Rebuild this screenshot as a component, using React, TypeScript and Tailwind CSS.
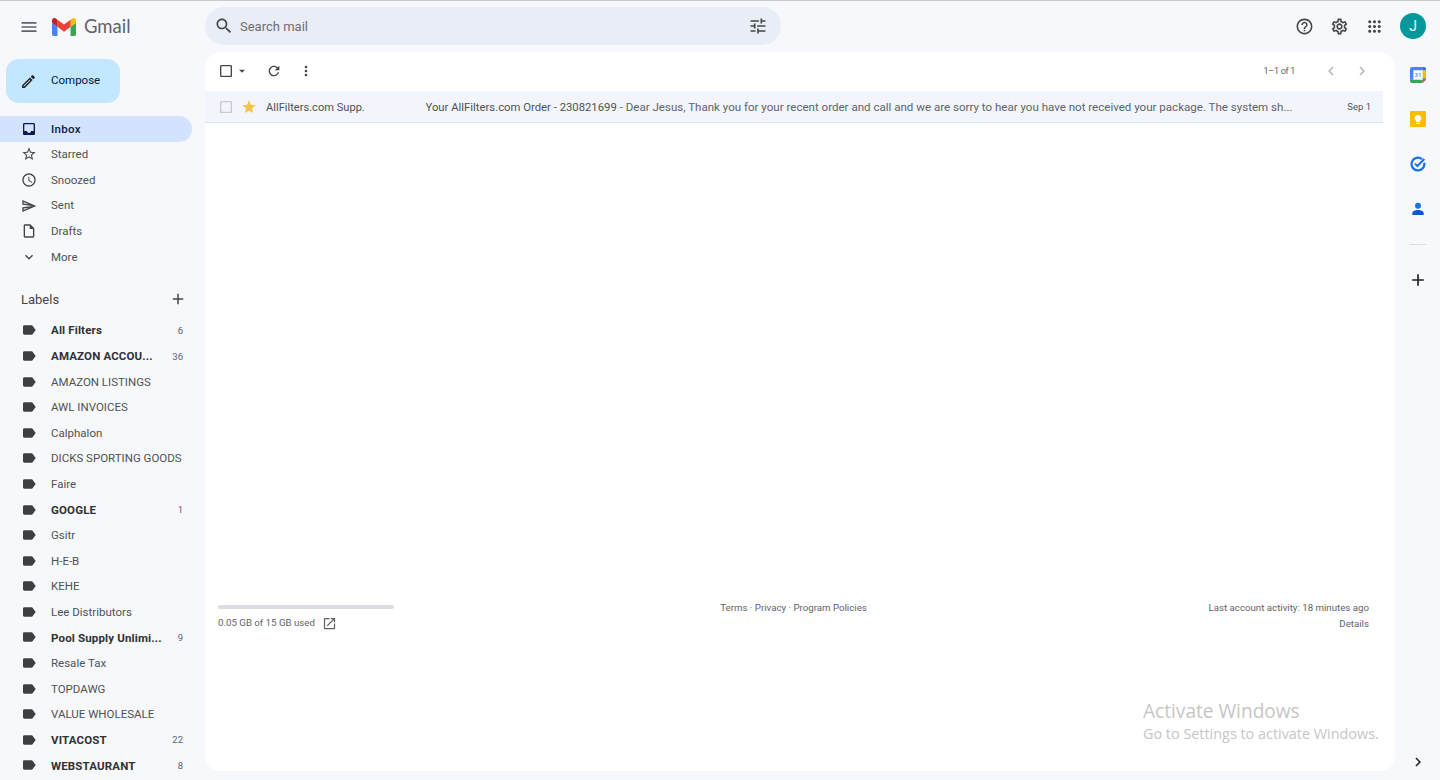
const icons = {
  menu: 'M3 18h18v-2H3v2zm0-5h18v-2H3v2zm0-7v2h18V6H3z',
  search:
    'M15.5 14h-.79l-.28-.27C15.41 12.59 16 11.11 16 9.5 16 5.91 13.09 3 9.5 3S3 5.91 3 9.5 5.91 16 9.5 16c1.61 0 3.09-.59 4.23-1.57l.27.28v.79l5 4.99L20.49 19l-4.99-5zm-6 0C7.01 14 5 11.99 5 9.5S7.01 5 9.5 5 14 7.01 14 9.5 11.99 14 9.5 14z',
  tune: 'M3 17v2h6v-2H3zM3 5v2h10V5H3zm10 16v-2h8v-2h-8v-2h-2v6h2zM7 9v2H3v2h4v2h2V9H7zm14 4v-2H11v2h10zm-6-4h2V7h4V5h-4V3h-2v6z',
  help: 'M11 18h2v-2h-2v2zm1-16C6.48 2 2 6.48 2 12s4.48 10 10 10 10-4.48 10-10S17.52 2 12 2zm0 18c-4.41 0-8-3.59-8-8s3.59-8 8-8 8 3.59 8 8-3.59 8-8 8zm0-14c-2.21 0-4 1.79-4 4h2c0-1.1.9-2 2-2s2 .9 2 2c0 2-3 1.75-3 5h2c0-2.25 3-2.5 3-5 0-2.21-1.79-4-4-4z',
  settings:
    'M19.43 12.98c.04-.32.07-.64.07-.98 0-.34-.03-.66-.07-.98l2.11-1.65c.19-.15.24-.42.12-.64l-2-3.46c-.09-.16-.26-.25-.44-.25-.06 0-.12.01-.17.03l-2.49 1c-.52-.4-1.08-.73-1.69-.98l-.38-2.65C14.46 2.18 14.25 2 14 2h-4c-.25 0-.46.18-.49.42l-.38 2.65c-.61.25-1.17.59-1.69.98l-2.49-1c-.06-.02-.12-.03-.18-.03-.17 0-.34.09-.43.25l-2 3.46c-.13.22-.07.49.12.64l2.11 1.65c-.04.32-.07.65-.07.98 0 .33.03.66.07.98l-2.11 1.65c-.19.15-.24.42-.12.64l2 3.46c.09.16.26.25.44.25.06 0 .12-.01.17-.03l2.49-1c.52.4 1.08.73 1.69.98l.38 2.65c.03.24.24.42.49.42h4c.25 0 .46-.18.49-.42l.38-2.65c.61-.25 1.17-.59 1.69-.98l2.49 1c.06.02.12.03.18.03.17 0 .34-.09.43-.25l2-3.46c.12-.22.07-.49-.12-.64l-2.11-1.65zm-1.98-1.71c.04.31.05.52.05.73 0 .21-.02.43-.05.73l-.14 1.13.89.7 1.08.84-.7 1.21-1.27-.51-1.04-.42-.9.68c-.43.32-.84.56-1.25.73l-1.06.43-.16 1.13-.2 1.35h-1.4l-.19-1.35-.16-1.13-1.06-.43c-.43-.18-.83-.41-1.23-.71l-.91-.7-1.06.43-1.27.51-.7-1.21 1.08-.84.89-.7-.14-1.13c-.03-.31-.05-.54-.05-.74s.02-.43.05-.73l.14-1.13-.89-.7-1.08-.84.7-1.21 1.27.51 1.04.42.9-.68c.43-.32.84-.56 1.25-.73l1.06-.43.16-1.13.2-1.35h1.39l.19 1.35.16 1.13 1.06.43c.43.18.83.41 1.23.71l.91.7 1.06-.43 1.27-.51.7 1.21-1.07.85-.89.7.14 1.13zM12 8c-2.21 0-4 1.79-4 4s1.79 4 4 4 4-1.79 4-4-1.79-4-4-4zm0 6c-1.1 0-2-.9-2-2s.9-2 2-2 2 .9 2 2-.9 2-2 2z',
  apps: 'M6 8c1.1 0 2-.9 2-2s-.9-2-2-2-2 .9-2 2 .9 2 2 2zm6 12c1.1 0 2-.9 2-2s-.9-2-2-2-2 .9-2 2 .9 2 2 2zm-6 0c1.1 0 2-.9 2-2s-.9-2-2-2-2 .9-2 2 .9 2 2 2zm0-6c1.1 0 2-.9 2-2s-.9-2-2-2-2 .9-2 2 .9 2 2 2zm6 0c1.1 0 2-.9 2-2s-.9-2-2-2-2 .9-2 2 .9 2 2 2zm4-8c0 1.1.9 2 2 2s2-.9 2-2-.9-2-2-2-2 .9-2 2zm-4 2c1.1 0 2-.9 2-2s-.9-2-2-2-2 .9-2 2 .9 2 2 2zm6 6c1.1 0 2-.9 2-2s-.9-2-2-2-2 .9-2 2 .9 2 2 2zm0 6c1.1 0 2-.9 2-2s-.9-2-2-2-2 .9-2 2 .9 2 2 2z',
  edit: 'M3 17.25V21h3.75L17.81 9.94l-3.75-3.75L3 17.25zM5.92 19H5v-.92l9.06-9.06.92.92L5.92 19zM20.71 5.63l-2.34-2.34c-.2-.2-.45-.29-.71-.29s-.51.1-.7.29l-1.83 1.83 3.75 3.75 1.83-1.83c.39-.39.39-1.02 0-1.41z',
  inbox:
    'M19 3H4.99c-1.11 0-1.98.89-1.98 2L3 19c0 1.1.88 2 1.99 2H19c1.1 0 2-.9 2-2V5c0-1.11-.9-2-2-2zm0 12h-4c0 1.66-1.35 3-3 3s-2.99-1.34-2.99-3H4.99V5H19v10z',
  star: 'M22 9.24l-7.19-.62L12 2 9.19 8.63 2 9.24l5.46 4.73L5.82 21 12 17.27 18.18 21l-1.63-7.03L22 9.24zM12 15.4l-3.76 2.27 1-4.28-3.32-2.88 4.38-.38L12 6.1l1.71 4.04 4.38.38-3.32 2.88 1 4.28L12 15.4z',
  clock:
    'M11.99 2C6.47 2 2 6.48 2 12s4.47 10 9.99 10C17.52 22 22 17.52 22 12S17.52 2 11.99 2zM12 20c-4.42 0-8-3.58-8-8s3.58-8 8-8 8 3.58 8 8-3.58 8-8 8zm.5-13H11v6l5.25 3.15.75-1.23-4.5-2.67z',
  sent: 'M4.01 6.03l7.51 3.22-7.52-1 .01-2.22m7.5 8.72L4 17.97v-2.22l7.51-1M2.01 3L2 10l15 2-15 2 .01 7L23 12 2.01 3z',
  draft:
    'M14 2H6c-1.1 0-1.99.9-1.99 2L4 20c0 1.1.89 2 1.99 2H18c1.1 0 2-.9 2-2V8l-6-6zM6 20V4h7v5h5v11H6z',
  chevronDown: 'M7.41 8.59 12 13.17l4.59-4.58L18 10l-6 6-6-6z',
  label:
    'M17.63 5.84C17.27 5.33 16.67 5 16 5L5 5.01C3.9 5.01 3 5.9 3 7v10c0 1.1.9 1.99 2 1.99L16 19c.67 0 1.27-.33 1.63-.84L22 12l-4.37-6.16z',
  plus: 'M19 13h-6v6h-2v-6H5v-2h6V5h2v6h6v2z',
  refresh:
    'M17.65 6.35C16.2 4.9 14.21 4 12 4c-4.42 0-7.99 3.58-7.99 8s3.57 8 7.99 8c3.73 0 6.84-2.55 7.73-6h-2.08c-.82 2.33-3.04 4-5.65 4-3.31 0-6-2.69-6-6s2.69-6 6-6c1.66 0 3.14.69 4.22 1.78L13 11h7V4l-2.35 2.35z',
  moreVert:
    'M12 8c1.1 0 2-.9 2-2s-.9-2-2-2-2 .9-2 2 .9 2 2 2zm0 2c-1.1 0-2 .9-2 2s.9 2 2 2 2-.9 2-2-.9-2-2-2zm0 6c-1.1 0-2 .9-2 2s.9 2 2 2 2-.9 2-2-.9-2-2-2z',
  checkbox:
    'M19 5v14H5V5h14m0-2H5c-1.1 0-2 .9-2 2v14c0 1.1.9 2 2 2h14c1.1 0 2-.9 2-2V5c0-1.1-.9-2-2-2z',
  caret: 'M7 10l5 5 5-5z',
  left: 'M15.41 7.41 14 6l-6 6 6 6 1.41-1.41L10.83 12z',
  right: 'M8.59 16.59 10 18l6-6-6-6-1.41 1.41L13.17 12z',
  openNew:
    'M19 19H5V5h7V3H5c-1.11 0-2 .9-2 2v14c0 1.1.89 2 2 2h14c1.1 0 2-.9 2-2v-7h-2v7zM14 3v2h3.59l-9.83 9.83 1.41 1.41L19 6.41V10h2V3h-7z',
  starFill:
    'M12 17.27 18.18 21l-1.64-7.03L22 9.24l-7.19-.61L12 2 9.19 8.63 2 9.24l5.46 4.73L5.82 21z',
};

function Icon({ d, className }: { d: string; className: string }) {
  return (
    <svg viewBox="0 0 24 24" fill="currentColor" className={className}>
      <path d={d} />
    </svg>
  );
}

const nav = [
  { name: 'Inbox', icon: icons.inbox, active: true },
  { name: 'Starred', icon: icons.star },
  { name: 'Snoozed', icon: icons.clock },
  { name: 'Sent', icon: icons.sent },
  { name: 'Drafts', icon: icons.draft },
  { name: 'More', icon: icons.chevronDown },
];

const labels = [
  { name: 'All Filters', count: '6', bold: true },
  { name: 'AMAZON ACCOU...', count: '36', bold: true },
  { name: 'AMAZON LISTINGS' },
  { name: 'AWL INVOICES' },
  { name: 'Calphalon' },
  { name: 'DICKS SPORTING GOODS' },
  { name: 'Faire' },
  { name: 'GOOGLE', count: '1', bold: true },
  { name: 'Gsitr' },
  { name: 'H-E-B' },
  { name: 'KEHE' },
  { name: 'Lee Distributors' },
  { name: 'Pool Supply Unlimi...', count: '9', bold: true },
  { name: 'Resale Tax' },
  { name: 'TOPDAWG' },
  { name: 'VALUE WHOLESALE' },
  { name: 'VITACOST', count: '22', bold: true },
  { name: 'WEBSTAURANT', count: '8', bold: true },
];

function GmailLogo() {
  return (
    <svg viewBox="52 42 88 66" className="w-6 h-[18px]">
      <path fill="#4285f4" d="M58 108h14V74L52 59v43c0 3.32 2.69 6 6 6" />
      <path fill="#34a853" d="M120 108h14c3.32 0 6-2.69 6-6V59l-20 15" />
      <path fill="#fbbc04" d="M120 48v26l20-15v-8c0-7.42-8.47-11.65-14.4-7.2" />
      <path fill="#ea4335" d="M72 74V48l24 18 24-18v26L96 92" />
      <path fill="#c5221f" d="M52 51v8l20 15V48l-5.6-4.2c-5.94-4.45-14.4-.22-14.4 7.2" />
    </svg>
  );
}

function CalendarIcon() {
  return (
    <svg viewBox="0 0 24 24" className="w-4 h-4">
      <path fill="#fff" d="M5 5h14v14H5z" />
      <path fill="#4285f4" d="M0 3a3 3 0 0 1 3-3h16v5H5v14H0z" />
      <path fill="#fbbc04" d="M19 5h5v12h-5z" />
      <path fill="#1a73e8" d="M19 0h2a3 3 0 0 1 3 3v2h-5z" />
      <path fill="#34a853" d="M0 19h19v5H3a3 3 0 0 1-3-3z" />
      <path fill="#188038" d="M19 17h5v2h-5z" />
      <path fill="#ea4335" d="M19 19h5l-5 5z" />
      <text
        x="12"
        y="15.5"
        textAnchor="middle"
        fontSize="9"
        fontWeight="500"
        fontFamily="Roboto, sans-serif"
        fill="#4285f4"
      >
        31
      </text>
    </svg>
  );
}

function KeepIcon() {
  return (
    <svg viewBox="0 0 24 24" className="w-4 h-4">
      <rect width="24" height="24" rx="2" fill="#fbbc04" />
      <path fill="#fff" d="M12 6a5 5 0 0 0-3 9v2h6v-2a5 5 0 0 0-3-9zM9.5 18h5v1.5h-5z" />
    </svg>
  );
}

function TasksIcon() {
  return (
    <svg viewBox="0 0 24 24" className="w-4 h-4">
      <path fill="none" stroke="#1a73e8" strokeWidth="3.4" d="M18 4.6A9.6 9.6 0 1 0 21.3 10" />
      <path fill="none" stroke="#1a73e8" strokeWidth="3" d="M7.5 11.5l3.6 3.6L21.5 4.5" />
    </svg>
  );
}

function ContactsIcon() {
  return (
    <svg viewBox="0 0 24 24" className="w-4 h-4">
      <circle cx="12" cy="7" r="4.5" fill="#1a73e8" />
      <path fill="#0b57d0" d="M3.5 21v-2.5C3.5 15 8 13.5 12 13.5s8.5 1.5 8.5 5V21z" />
    </svg>
  );
}

export default function App() {
  return (
    <div className="h-[780px] w-[1440px] overflow-hidden bg-[#f6f8fc] font-['Roboto',sans-serif] text-[#444746] flex flex-col relative">
      <div className="h-px bg-[#c8cacc]" />

      <header className="h-[51px] flex items-center shrink-0">
        <div className="w-[205px] flex items-center pl-[19px]">
          <Icon d={icons.menu} className="w-5 h-5 text-[#5f6368]" />
          <div className="ml-[13px]">
            <GmailLogo />
          </div>
          <span className="ml-2 text-[18.5px] font-['Lato',sans-serif] text-[#5f6368]">Gmail</span>
        </div>
        <div className="w-[576px] h-[38px] -mt-[1px] rounded-full bg-[#e9eef6] flex items-center pl-[9px] pr-[13px]">
          <Icon d={icons.search} className="w-5 h-5 text-[#444746]" />
          <span className="ml-[6px] pt-[2px] flex-1 text-[13px] text-[#6b6e73]">Search mail</span>
          <Icon d={icons.tune} className="w-5 h-5 text-[#444746]" />
        </div>
        <div className="ml-auto flex items-center pr-[14px] -mt-[1px]">
          <Icon d={icons.help} className="w-[19px] h-[19px] text-[#444746]" />
          <Icon d={icons.settings} className="w-[19px] h-[19px] ml-4 text-[#444746]" />
          <Icon d={icons.apps} className="w-[19px] h-[19px] ml-4 text-[#444746]" />
          <div className="ml-4 w-[26px] h-[26px] rounded-full bg-[#00979d] text-white text-[14px] flex items-center justify-center">
            J
          </div>
        </div>
      </header>

      <div className="flex flex-1 min-h-0">
        <aside className="w-[205px] shrink-0 overflow-hidden">
          <button className="ml-[6px] mt-[7px] w-[114px] h-[44px] rounded-[13px] bg-[#c2e7ff] flex items-center pl-[14px] text-[11.5px] text-[#001d35]">
            <Icon d={icons.edit} className="w-[17px] h-[17px] text-[#1f1f1f]" />
            <span className="ml-[14px]">Compose</span>
          </button>

          <nav className="mt-[13px]">
            {nav.map((item) => (
              <div
                key={item.name}
                className={`h-[25.6px] w-[192px] flex items-center pl-[21px] rounded-r-full text-[11.5px] ${
                  item.active
                    ? 'bg-[#d3e3fd] text-[#041e49] font-medium tracking-[0.3px]'
                    : 'text-[#4f5254]'
                }`}
              >
                <Icon
                  d={item.icon}
                  className={`w-4 h-4 ${item.active ? 'text-[#041e49]' : 'text-[#444746]'}`}
                />
                <span className="ml-[14px] pt-[1px]">{item.name}</span>
              </div>
            ))}
          </nav>

          <div className="h-[48px] pt-[10px] pl-[21px] pr-[18px] flex items-center justify-between">
            <span className="text-[13px] pt-[1.5px] text-[#444746]">Labels</span>
            <Icon d={icons.plus} className="w-[18px] h-[18px] text-[#444746]" />
          </div>

          <ul>
            {labels.map((label) => (
              <li
                key={label.name}
                className={`h-[25.6px] w-[192px] flex items-center pl-[21px] pr-[9px] text-[11.5px] ${
                  label.bold ? 'font-bold text-[#303134] tracking-[0.15px]' : 'text-[#4f5254]'
                }`}
              >
                <Icon d={icons.label} className="w-4 h-4 shrink-0 text-[#3c4043]" />
                <span className="ml-[14px] pt-[1.5px] flex-1 whitespace-nowrap">{label.name}</span>
                {label.count && (
                  <span className="text-[9.5px] pt-[1.5px] font-normal tracking-normal text-[#5f6368]">
                    {label.count}
                  </span>
                )}
              </li>
            ))}
          </ul>
        </aside>

        <main className="flex-1 mb-[9px] bg-white rounded-2xl overflow-hidden">
          <div className="h-[39px] pb-px flex items-center pl-[13px] pr-6">
            <Icon d={icons.checkbox} className="w-4 h-4 text-[#444746]" />
            <Icon d={icons.caret} className="w-[14px] h-[14px] ml-px text-[#444746]" />
            <Icon d={icons.refresh} className="w-4 h-4 ml-[17px] text-[#444746]" />
            <Icon d={icons.moreVert} className="w-4 h-4 ml-4 text-[#444746]" />
            <span className="ml-auto pt-[2px] text-[9px] tracking-[-0.3px] text-[#5f6368]">
              1–1 of 1
            </span>
            <Icon d={icons.left} className="w-[18px] h-[18px] ml-[27px] text-[#b5b7ba]" />
            <Icon d={icons.right} className="w-[18px] h-[18px] ml-[13px] text-[#b5b7ba]" />
          </div>

          <div className="h-[32px] mr-[12px] bg-[#f2f6fc] border-b border-[#dfe4ec] flex items-center pl-[13px] pr-[12px] text-[11.3px] text-[#4f5254]">
            <Icon d={icons.checkbox} className="w-4 h-4 text-[#c7c9cc]" />
            <Icon d={icons.starFill} className="w-4 h-4 ml-[7px] text-[#f6c344]" />
            <span className="ml-[9px] w-[159.5px] pt-[3px] shrink-0 text-[11.1px]">
              AllFilters.com Supp.
            </span>
            <span className="flex-1 min-w-0 pt-[3px] whitespace-nowrap overflow-hidden">
              Your AllFilters.com Order - 230821699
              <span className="text-[11.55px] text-[#5f6368]">
                {' '}
                - Dear Jesus, Thank you for your recent order and call and we are sorry to hear you
                have not received your package. The system sh...
              </span>
            </span>
            <span className="ml-[20px] pt-[2px] text-[9.5px] text-[#4f5254]">Sep 1</span>
          </div>

          <footer className="mt-[478px] pl-[13px] pr-[26px] grid grid-cols-3 text-[9.7px] text-[#5f6368]">
            <div>
              <div className="w-[176px] h-[4px] mt-[4px] rounded-full bg-[#dadce0]" />
              <div className="mt-[7px] flex items-center">
                <span>0.05 GB of 15 GB used</span>
                <Icon d={icons.openNew} className="w-[15px] h-[15px] ml-[7px] text-[#5f6368]" />
              </div>
            </div>
            <div className="text-center">Terms · Privacy · Program Policies</div>
            <div className="text-right">
              <div>Last account activity: 18 minutes ago</div>
              <div className="mt-px">Details</div>
            </div>
          </footer>
        </main>

        <aside className="w-[45px] shrink-0 flex flex-col items-center pl-px pt-[15px]">
          <CalendarIcon />
          <div className="mt-[28px]">
            <KeepIcon />
          </div>
          <div className="mt-[29px]">
            <TasksIcon />
          </div>
          <div className="mt-[29px]">
            <ContactsIcon />
          </div>
          <div className="mt-[27px] w-[16px] h-px bg-[#dadce0]" />
          <Icon d={icons.plus} className="w-5 h-5 mt-[25px] text-[#1f1f1f]" />
          <Icon d={icons.right} className="w-[18px] h-[18px] mt-auto mb-[9px] text-[#1f1f1f]" />
        </aside>
      </div>

      <div className="absolute left-[1143px] top-[699px] font-['Open_Sans',sans-serif] text-[#c6c6c6]">
        <div className="text-[19.1px] leading-[25px]">Activate Windows</div>
        <div className="text-[14.4px] leading-[20px]">Go to Settings to activate Windows.</div>
      </div>
    </div>
  );
}
